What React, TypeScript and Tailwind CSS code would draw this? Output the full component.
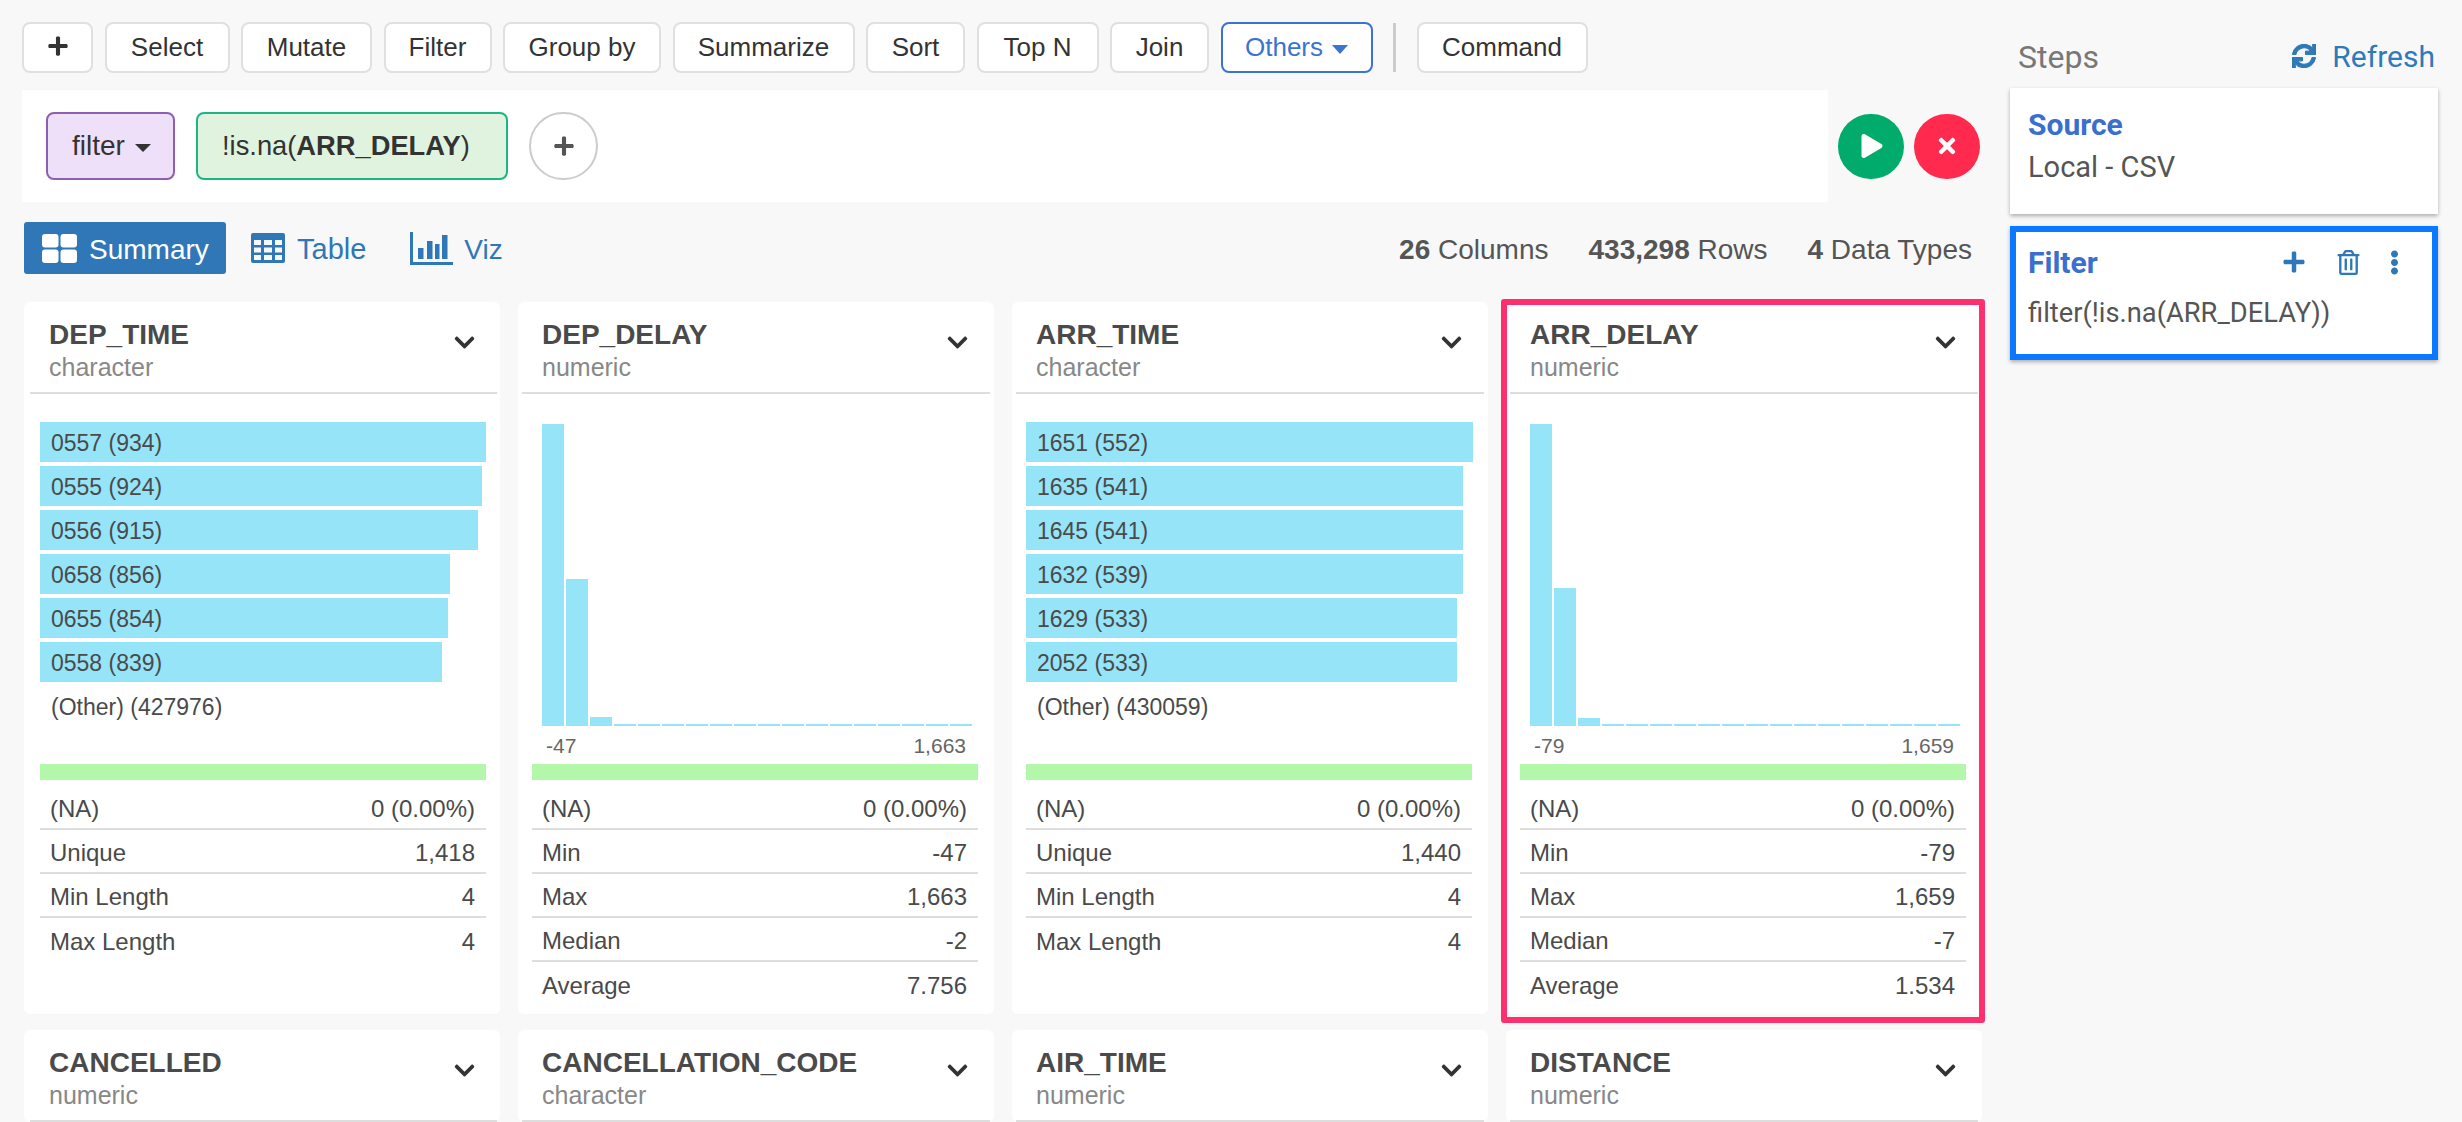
import React from 'react';
import { FaPlus, FaChevronDown, FaPlay, FaTimes, FaEllipsisV, FaRegTrashAlt, FaSync } from 'react-icons/fa';

const toolButtons = [
  { label: 'Select', w: 125 },
  { label: 'Mutate', w: 131 },
  { label: 'Filter', w: 108 },
  { label: 'Group by', w: 158 },
  { label: 'Summarize', w: 182 },
  { label: 'Sort', w: 99 },
  { label: 'Top N', w: 122 },
  { label: 'Join', w: 99 },
];

type Stat = [string, string];
type Column = {
  name: string;
  type: string;
  first?: boolean;
  selected?: boolean;
  bars?: [string, number][];
  other?: string;
  hist?: number[];
  range?: [string, string];
  stats?: Stat[];
};

const tail = Array(15).fill(2);

const columns: Column[] = [
  {
    name: 'DEP_TIME',
    type: 'character',
    first: true,
    bars: [['0557 (934)', 446], ['0555 (924)', 442], ['0556 (915)', 438], ['0658 (856)', 410], ['0655 (854)', 408], ['0558 (839)', 402]],
    other: '(Other) (427976)',
    stats: [['(NA)', '0 (0.00%)'], ['Unique', '1,418'], ['Min Length', '4'], ['Max Length', '4']],
  },
  {
    name: 'DEP_DELAY',
    type: 'numeric',
    hist: [302, 147, 9, ...tail],
    range: ['-47', '1,663'],
    stats: [['(NA)', '0 (0.00%)'], ['Min', '-47'], ['Max', '1,663'], ['Median', '-2'], ['Average', '7.756']],
  },
  {
    name: 'ARR_TIME',
    type: 'character',
    bars: [['1651 (552)', 447], ['1635 (541)', 437], ['1645 (541)', 437], ['1632 (539)', 437], ['1629 (533)', 431], ['2052 (533)', 431]],
    other: '(Other) (430059)',
    stats: [['(NA)', '0 (0.00%)'], ['Unique', '1,440'], ['Min Length', '4'], ['Max Length', '4']],
  },
  {
    name: 'ARR_DELAY',
    type: 'numeric',
    selected: true,
    hist: [302, 138, 8, ...tail],
    range: ['-79', '1,659'],
    stats: [['(NA)', '0 (0.00%)'], ['Min', '-79'], ['Max', '1,659'], ['Median', '-7'], ['Average', '1.534']],
  },
];

const secondRow: Column[] = [
  { name: 'CANCELLED', type: 'numeric', first: true },
  { name: 'CANCELLATION_CODE', type: 'character' },
  { name: 'AIR_TIME', type: 'numeric' },
  { name: 'DISTANCE', type: 'numeric' },
];

function CardHeader({ col }: { col: Column }) {
  return (
    <div
      className={
        col.first
          ? 'mr-[3px] ml-[6px] flex h-[92px] justify-between border-b-2 border-[#dddddd] pr-[21px] pl-[19px]'
          : 'mx-[4px] flex h-[92px] justify-between border-b-2 border-[#dddddd] pr-[21px] pl-[20px]'
      }
    >
      <div className="pt-[16px]">
        <div className="text-[28px] leading-[34px] font-bold text-[#4a4a4a]">{col.name}</div>
        <div className="text-[25px] leading-[30px] text-[#888888]">{col.type}</div>
      </div>
      <FaChevronDown className="mt-[29px] text-[23px] text-[#333333]" />
    </div>
  );
}

function ColumnCard({ col }: { col: Column }) {
  const inset = col.first ? 'mr-[14px] ml-[16px]' : 'mr-[16px] ml-[14px]';
  return (
    <div className="relative h-[712px] w-[476px] rounded-[6px] bg-white">
      <CardHeader col={col} />
      <div className={`h-[370px] pt-[28px] ${inset}`}>
        {col.bars && (
          <div className="flex flex-col gap-[4px]">
            {col.bars.map(([label, w]) => (
              <div key={label} className="h-[40px] bg-[#96e4f8] pl-[11px] text-[23px] leading-[42px] text-[#4a4a4a]" style={{ width: w }}>
                {label}
              </div>
            ))}
            <div className="h-[40px] pl-[11px] text-[23px] leading-[42px] text-[#4a4a4a]">{col.other}</div>
          </div>
        )}
        {col.hist && (
          <>
            <div className="flex h-[304px] items-end gap-[2px] pl-[10px]">
              {col.hist.map((h, i) => (
                <div key={i} className="w-[22px] bg-[#96e4f8]" style={{ height: h }} />
              ))}
            </div>
            <div className="flex justify-between pr-[12px] pl-[14px] text-[21px] leading-[40px] text-[#666666]">
              <span>{col.range?.[0]}</span>
              <span>{col.range?.[1]}</span>
            </div>
          </>
        )}
      </div>
      <div className={`h-[16px] bg-[#b3f7ab] ${inset}`} />
      <div className={`mt-[6px] ${inset}`}>
        {col.stats?.map(([k, v], i) => (
          <div
            key={k}
            className={
              i < (col.stats as Stat[]).length - 1
                ? 'flex h-[44px] items-center justify-between border-b-2 border-[#dddddd] pt-[4px] pr-[11px] pl-[10px] text-[24px] text-[#4a4a4a]'
                : 'flex h-[44px] items-center justify-between pt-[4px] pr-[11px] pl-[10px] text-[24px] text-[#4a4a4a]'
            }
          >
            <span>{k}</span>
            <span>{v}</span>
          </div>
        ))}
      </div>
      {col.selected && (
        <div className="pointer-events-none absolute -top-[3px] -right-[3px] -bottom-[9px] -left-[5px] rounded-[3px] border-[6px] border-[#ff2e6e]" />
      )}
    </div>
  );
}

export default function App() {
  return (
    <div className="flex h-[1122px] w-[2462px] overflow-hidden bg-[#f8f8f8] font-['Liberation_Sans',Arial,sans-serif]">
      <div className="w-[2010px] shrink-0">
        {/* toolbar */}
        <div className="flex items-center gap-[11.5px] pt-[22px] pl-[22px] text-[26px] text-[#333333]">
          <button className="flex h-[51px] w-[71px] items-center justify-center rounded-[8px] border-2 border-[#e0e0e0] bg-white">
            <FaPlus className="mb-[3px] text-[22px] text-[#333333]" />
          </button>
          {toolButtons.map((b) => (
            <button key={b.label} className="h-[51px] rounded-[8px] border-2 border-[#e0e0e0] bg-white" style={{ width: b.w }}>
              {b.label}
            </button>
          ))}
          <button className="flex h-[51px] w-[152px] items-center justify-center gap-[9px] rounded-[8px] border-2 border-[#3b73d1] bg-white text-[#3b73d1]">
            Others
            <span className="mt-[4px] h-0 w-0 border-x-[8px] border-t-[9px] border-x-transparent border-t-[#3b73d1]" />
          </button>
          <div className="mx-[9px] h-[49px] w-[3px] bg-[#cccccc]" />
          <button className="h-[51px] w-[171px] rounded-[8px] border-2 border-[#e0e0e0] bg-white">Command</button>
        </div>

        {/* formula row */}
        <div className="mt-[17px] flex items-center">
          <div className="ml-[22px] flex h-[112px] w-[1806px] items-center gap-[21px] bg-white pl-[24px] text-[#333333]">
            <div className="flex h-[68px] w-[129px] items-center gap-[10px] rounded-[8px] border-2 border-[#8e5fb0] bg-[#eee0f8] pl-[24px] text-[28px]">
              filter
              <span className="mt-[4px] h-0 w-0 border-x-[8px] border-t-[8px] border-x-transparent border-t-[#333333]" />
            </div>
            <div className="flex h-[68px] w-[312px] items-center rounded-[8px] border-2 border-[#1db584] bg-[#dff3df] pl-[24px] text-[27.300px]">
              <span>
                !is.na(<b>ARR_DELAY</b>)
              </span>
            </div>
            <div className="flex h-[68px] w-[69px] items-center justify-center rounded-full border-2 border-[#cccccc] bg-white">
              <FaPlus className="text-[22px] text-[#555555]" />
            </div>
          </div>
          <div className="ml-[10px] flex h-[65px] w-[66px] items-center justify-center rounded-full bg-[#00ab6b]">
            <FaPlay className="ml-[1px] text-[24px] text-white" />
          </div>
          <div className="ml-[10px] flex h-[65px] w-[66px] items-center justify-center rounded-full bg-[#ff2a4d]">
            <FaTimes className="text-[24px] text-white" />
          </div>
        </div>

        {/* tabs and totals */}
        <div className="mt-[20px] flex h-[52px] items-center pl-[24px] text-[28px]">
          <div className="flex h-[52px] w-[202px] items-center gap-[12px] rounded-[3px] bg-[#2f77b7] pl-[18px] text-white">
            <svg viewBox="0 0 35 29" className="h-[29px] w-[35px]" fill="currentColor">
              <rect x="0" y="0" width="16.500" height="13.500" rx="3" />
              <rect x="18.500" y="0" width="16.500" height="13.500" rx="3" />
              <rect x="0" y="15.500" width="16.500" height="13.500" rx="3" />
              <rect x="18.500" y="15.500" width="16.500" height="13.500" rx="3" />
            </svg>
            <span className="pt-[3px]">Summary</span>
          </div>
          <div className="ml-[25px] flex items-center gap-[12px] text-[#2f77b7]">
            <svg viewBox="0 0 34 30" className="h-[30px] w-[34px]" fill="currentColor">
              <path d="M2 0h30a2 2 0 0 1 2 2v26a2 2 0 0 1-2 2H2a2 2 0 0 1-2-2V2a2 2 0 0 1 2-2Zm1 7v5h7V7H3Zm10 0v5h8V7h-8Zm11 0v5h7V7h-7ZM3 14.500v5h7v-5H3Zm10 0v5h8v-5h-8Zm11 0v5h7v-5h-7ZM3 22v5h7v-5H3Zm10 0v5h8v-5h-8Zm11 0v5h7v-5h-7Z" fillRule="evenodd" />
            </svg>
            <span className="pt-[3px] text-[29px]">Table</span>
          </div>
          <div className="ml-[44px] flex items-center gap-[11px] text-[#2f77b7]">
            <svg viewBox="0 0 43 33" className="h-[33px] w-[43px]" fill="currentColor">
              <path d="M0 0h3v30h40v3H0V0Z" />
              <path d="M8 16h5.500v11H8zM17 9h5.500v18H17zM25 12h4.500v15H25zM32 3h5.500v24H32z" />
            </svg>
            <span className="pt-[3px]">Viz</span>
          </div>
          <div className="ml-auto flex gap-[40px] pt-[3px] pr-[38px] text-[#555555]">
            <span><b>26</b> Columns</span>
            <span><b>433,298</b> Rows</span>
            <span><b>4</b> Data Types</span>
          </div>
        </div>

        {/* column cards */}
        <div className="mt-[28px] ml-[24px] grid w-[1958px] grid-cols-[476px_476px_476px_476px] gap-x-[18px] gap-y-[16px]">
          {columns.map((c) => (
            <ColumnCard key={c.name} col={c} />
          ))}
          {secondRow.map((c) => (
            <div key={c.name} className="h-[92px] rounded-[6px] bg-white">
              <CardHeader col={c} />
            </div>
          ))}
        </div>
      </div>

      {/* steps */}
      <div className="w-[428px] font-['Roboto',sans-serif]">
        <div className="flex h-[88px] items-center justify-between pt-[26px] pr-[3px] pl-[8px]">
          <span className="text-[32px] text-[#777777]">Steps</span>
          <span className="-mt-[2px] flex items-center gap-[16px] text-[30px] text-[#2f7ab8]">
            <FaSync className="text-[24px]" stroke="currentColor" strokeWidth={24} />
            Refresh
          </span>
        </div>
        <div className="h-[126px] bg-white pt-[18px] pl-[18px] shadow-[0_2px_4px_rgba(0,0,0,0.3)]">
          <div className="text-[30px] leading-[38px] font-bold text-[#3a6fd0]">Source</div>
          <div className="mt-[4px] text-[29px] leading-[38px] text-[#555555]">Local - CSV</div>
        </div>
        <div className="mt-[12px] h-[134px] border-[6px] border-[#0a78ff] bg-white pt-[11px] pl-[12px] shadow-[0_2px_4px_rgba(0,0,0,0.3)]">
          <div className="flex h-[38px] items-center">
            <span className="text-[30px] font-bold text-[#3a6fd0]">Filter</span>
            <FaPlus className="ml-[184px] text-[24px] text-[#2f77b7]" />
            <FaRegTrashAlt className="ml-[30px] text-[25px] text-[#2f77b7]" />
            <FaEllipsisV className="ml-[21px] text-[25px] text-[#2f77b7]" />
          </div>
          <div className="mt-[13px] text-[27.300px] leading-[38px] text-[#555555]">filter(!is.na(ARR_DELAY))</div>
        </div>
      </div>
    </div>
  );
}
